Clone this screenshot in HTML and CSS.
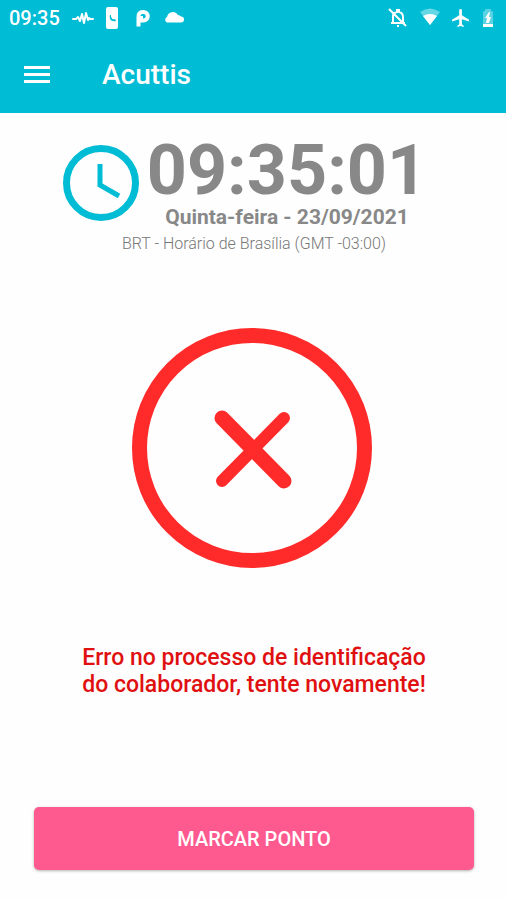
FILE: index.html
```html
<!DOCTYPE html>
<html lang="pt-BR">
<head>
<meta charset="utf-8">
<meta name="viewport" content="width=device-width, initial-scale=1">
<title>Acuttis</title>
<link rel="stylesheet" href="styles.css">
</head>
<body>
<header class="header">
  <div class="status">
    <div class="status-group">
      <span class="status-time">09:35</span>
      <svg width="22" height="20" viewBox="0 0 22 20" fill="none" stroke="#fff" stroke-width="2" stroke-linecap="round" stroke-linejoin="round"><path d="M1 11h3l2-2 2 4 2-7 2 9 2-10 2 7 1-2 1 1h3"/></svg>
      <svg width="14" height="22" viewBox="0 0 14 22"><rect width="12" height="22" rx="2" fill="#fff"/><path d="M4 8c-1 4 1 7 6 6l-1-2c-3 1-4-1-4-4z" fill="#00bcd4"/></svg>
      <svg width="20" height="20" viewBox="0 0 20 20" fill="none" stroke="#fff" stroke-width="4"><path d="M6.500 18.500V8.500a4 4 0 0 1 4-4.500h1a4 4 0 0 1 0 8.500H9V8"/></svg>
      <svg width="20" height="20" viewBox="0 0 20 20" fill="#fff"><path d="M3 14.500a3 3 0 0 1 0-5.500 6 6 0 0 1 11-2 4 4 0 0 1 3 1.500 3 3 0 0 1 0 6z"/></svg>
    </div>
    <div class="status-group">
      <svg width="20" height="20" viewBox="0 0 20 20" fill="none" stroke="#fff" stroke-width="2"><path d="M5 15V8q0-3 4-4V2h2v2q4 1 4 5v6M3 15h14M9 18h2M1 1l17 17"/></svg>
      <svg width="20" height="20" viewBox="0 0 20 20" fill="#fff"><path opacity=".4" d="M0 4q10-7 20 0L10 17z"/><path d="M3 8q7-4 14 0l-7 9z"/></svg>
      <svg width="18" height="18" viewBox="2 2 20 20" fill="#fff"><path d="M21 16v-2l-8-5V3.500a1.500 1.500 0 0 0-3 0V9l-8 5v2l8-2.500V19l-2 1.500V22l3.500-1 3.500 1v-1.500L13 19v-5.500z"/></svg>
      <svg width="12" height="20" viewBox="0 0 12 20"><path opacity=".35" fill="#fff" d="M1 19V4q0-1 2-1V1h6v2q2 0 2 1v15z"/><path fill="#fff" d="M1 16h10v3H1zM7 4l-4 6h2l-1 5h3l2-6H7l1-5z"/></svg>
    </div>
  </div>
  <div class="toolbar">
    <button class="menu" type="button" aria-label="Menu">
      <svg width="26" height="20" viewBox="0 0 26 20" fill="#fff"><path d="M0 1h26v3H0zM0 8h26v3H0zM0 15h26v3H0z"/></svg>
    </button>
    <h1 class="title">Acuttis</h1>
  </div>
</header>
<main class="main">
  <section class="clock">
    <div class="clock-row">
      <svg width="76" height="76" viewBox="0 0 76 76" fill="none" stroke="#00bcd4"><circle cx="38" cy="38" r="34.500" stroke-width="7"/><path d="M37 19v21l19 11" stroke-width="5"/></svg>
      <div class="clock-text">
        <time class="time">09:35:01</time>
        <span class="date">Quinta-feira - 23/09/2021</span>
      </div>
    </div>
    <p class="zone">BRT - Horário de Brasília (GMT -03:00)</p>
  </section>
  <section class="result">
    <svg width="245" height="240" viewBox="0 0 245 240" fill="none" stroke="#ff2a2a" stroke-linecap="round"><circle cx="120" cy="120" r="112.500" stroke-width="15"/><path d="M90 90l62 63" stroke-width="15"/><path d="M152 90l-62 63" stroke-width="12"/></svg>
    <p class="message">Erro no processo de identificação<br>do colaborador, tente novamente!</p>
  </section>
  <button class="action" type="button">MARCAR PONTO</button>
</main>
</body>
</html>
```
FILE: styles.css
```css
* {
  box-sizing: border-box;
}

body {
  margin: 0;
  min-height: 100vh;
  display: flex;
  flex-direction: column;
  background: #fefefe;
  font-family: Roboto, "Liberation Sans", sans-serif;
}

svg {
  display: block;
  flex: none;
}

.header {
  background: #00bcd4;
  color: #fff;
}

.status {
  display: flex;
  justify-content: space-between;
  align-items: center;
  height: 36px;
  padding: 0 12px 0 9px;
}

.status-group {
  display: flex;
  align-items: center;
  gap: 12px;
}

.status-time {
  font-size: 20px;
  font-weight: 500;
  line-height: 24px;
}

.toolbar {
  display: flex;
  align-items: center;
  gap: 52px;
  height: 77px;
  padding: 0 24px;
}

.menu {
  padding: 0;
  border: 0;
  background: none;
}

.title {
  margin: 0;
  font-size: 28px;
  font-weight: 500;
  line-height: 32px;
}

.main {
  flex: 1;
  display: flex;
  flex-direction: column;
  padding: 22px 32px 30px 34px;
}

.clock {
  display: flex;
  flex-direction: column;
  align-items: center;
  color: #888;
}

.clock-row {
  display: flex;
  gap: 8px;
  margin-right: 18px;
}

.clock-row svg {
  margin-top: 10px;
}

.clock-text {
  display: flex;
  flex-direction: column;
  align-items: center;
}

.time {
  font-size: 70px;
  font-weight: 700;
  line-height: 70px;
}

.date {
  font-size: 21px;
  font-weight: 700;
  line-height: 24px;
}

.zone {
  margin: 5px 0 0;
  color: #777;
  font-size: 16px;
  font-weight: 300;
  line-height: 20px;
}

.result {
  flex: 1;
  display: flex;
  flex-direction: column;
  align-items: center;
  padding-top: 74px;
}

.message {
  margin: 76px 0 0;
  color: #e01010;
  font-size: 23px;
  font-weight: 500;
  line-height: 27px;
  text-align: center;
}

.action {
  height: 63px;
  border: 0;
  border-radius: 5px;
  background: #ff5a90;
  box-shadow: 0 1px 3px rgba(0, 0, 0, 0.3);
  color: #fff;
  font-family: inherit;
  font-size: 20px;
  font-weight: 500;
}
```
